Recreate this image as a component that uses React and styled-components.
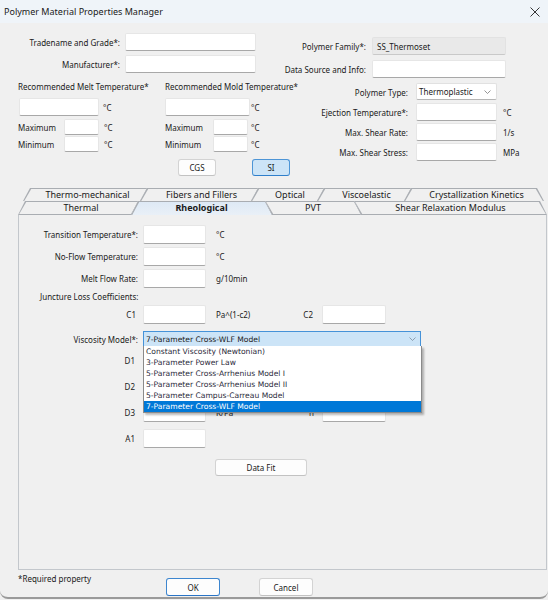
import React from "react";
import styled, { createGlobalStyle } from "styled-components";

const GlobalStyle = createGlobalStyle`
  * { box-sizing: border-box; }
  html, body { margin: 0; padding: 0; background: #f0f0f0; }
  body {
    font-family: "Noto Sans", "Open Sans", sans-serif;
    font-size: 8px;
    color: #1a1a1a;
  }
  #root { width: 548px; height: 600px; }
`;

const Window = styled.div`
  width: 548px;
  height: 599px;
  display: flex;
  flex-direction: column;
  background: #f0f0f0;
  border-bottom: 2px solid #9a9a9a;
  border-radius: 0 0 8px 8px;
  overflow: hidden;
`;

const TitleBar = styled.div`
  height: 23px;
  flex: 0 0 23px;
  display: flex;
  align-items: center;
  justify-content: space-between;
  padding: 0 8px 0 4px;
  background: #eff4f9;
  font-size: 9px;
  color: #1a1a1a;
`;

const CloseGlyph = styled.svg`
  width: 10px;
  height: 10px;
  display: block;
`;

const Body = styled.div`
  flex: 1;
  display: flex;
  flex-direction: column;
`;

/* ---------- top form ---------- */

const IdentityRow = styled.div`
  display: flex;
  align-items: flex-start;
  margin-top: 10px;
`;

const FieldGrid = styled.div`
  display: grid;
  grid-template-columns: ${(p) => p.$cols};
  grid-auto-rows: 18px;
  row-gap: ${(p) => p.$rowGap}px;
  margin-top: ${(p) => p.$mt || 0}px;
  align-items: center;
`;

const FieldLabel = styled.div`
  text-align: right;
  padding-right: ${(p) => p.$pad ?? 5}px;
  white-space: nowrap;
`;

const TextBox = styled.input.attrs({ type: "text", readOnly: true })`
  display: block;
  width: ${(p) => p.$w}px;
  height: ${(p) => p.$h || 18}px;
  margin: 0;
  padding: 0 4px;
  font: inherit;
  background: #ffffff;
  border: 1px solid #e6e6e6;
  border-bottom-color: #a8a8a8;
  border-radius: 2px;
  outline: none;
`;

const ReadOnlyBox = styled.div`
  width: ${(p) => p.$w}px;
  height: 18px;
  display: flex;
  align-items: center;
  padding-left: 4px;
  background: #e9e9e9;
  border: 1px solid #e2e2e2;
  border-bottom-color: #c9c9c9;
  border-radius: 2px;
`;

const ProcessRow = styled.div`
  display: flex;
  align-items: flex-start;
`;

const TempColumn = styled.div`
  width: 320px;
  flex: 0 0 320px;
  padding: 3px 0 0 18px;
`;

const TempGroups = styled.div`
  display: flex;
`;

const TempGroup = styled.div`
  width: ${(p) => p.$w}px;
  flex: 0 0 ${(p) => p.$w}px;
  display: flex;
  flex-direction: column;
`;

const GroupTitle = styled.div`
  height: 12px;
  line-height: 12px;
  white-space: nowrap;
`;

const MainTempRow = styled.div`
  display: flex;
  align-items: center;
  gap: ${(p) => p.$gap}px;
  margin: 5px 0 0 ${(p) => p.$ml || 0}px;
`;

const RangeGrid = styled.div`
  display: grid;
  grid-template-columns: ${(p) => p.$label}px 35px auto;
  grid-auto-rows: 16px;
  row-gap: 1px;
  align-items: center;
  margin-top: 3px;
`;

const Unit = styled.div`
  padding-left: ${(p) => p.$pad ?? 0}px;
  white-space: nowrap;
`;

const UnitButtons = styled.div`
  display: flex;
  gap: 36px;
  margin: 7px 0 0 160px;
`;

const PushButton = styled.button`
  width: ${(p) => p.$w}px;
  height: ${(p) => p.$h || 17}px;
  margin: 0;
  padding: 0;
  font: inherit;
  color: #1a1a1a;
  background: ${(p) => (p.$active ? "#cce4f7" : "#fdfdfd")};
  border: 1px solid ${(p) => (p.$active ? "#4d95d6" : p.$default ? "#3d86cf" : "#d3d3d3")};
  border-bottom-color: ${(p) => (p.$active ? "#2f7fcb" : p.$default ? "#2a74c4" : "#c2c2c2")};
  border-radius: 3px;
`;

const ComboBox = styled.div`
  width: 81px;
  height: 17px;
  display: flex;
  align-items: center;
  justify-content: space-between;
  padding: 0 5px 0 2px;
  background: #ffffff;
  border: 1px solid #e1e1e1;
  border-bottom-color: #b5b5b5;
  border-radius: 2px;
  align-self: start;
`;

const Chevron = styled.svg`
  width: 7px;
  height: 4px;
  display: block;
`;

/* ---------- tabs ---------- */

const TabsArea = styled.div`
  margin-top: 12px;
  display: flex;
  flex-direction: column;
`;

const TabRow = styled.div`
  display: flex;
  height: ${(p) => p.$h}px;
  padding-left: ${(p) => p.$offset}px;
`;

const S = 7;
const pt = (x, y) => `${x} ${y}`;
const outerPoly = (l, r) =>
  [
    l === "f" ? pt(`${S}px`, "0") : pt("0", "0"),
    r === "f" ? pt("100%", "0") : pt(`calc(100% - ${S}px)`, "0"),
    r === "f" ? pt(`calc(100% - ${S}px)`, "100%") : pt("100%", "100%"),
    l === "f" ? pt("0", "100%") : pt(`${S}px`, "100%"),
  ].join(", ");
const innerPoly = (l, r, last, bottom) => {
  const dl = 1.2;
  const dr = last ? 1.2 : 0;
  const b = bottom ? "calc(100% - 1px)" : "100%";
  return [
    l === "f" ? pt(`${S + dl}px`, "1px") : pt(`${dl}px`, "1px"),
    r === "f" ? pt(`calc(100% - ${dr}px)`, "1px") : pt(`calc(100% - ${S + dr}px)`, "1px"),
    r === "f" ? pt(`calc(100% - ${S + dr}px)`, b) : pt(`calc(100% - ${dr}px)`, b),
    l === "f" ? pt(`${dl}px`, b) : pt(`${S + dl}px`, b),
  ].join(", ");
};

const Tab = styled.div`
  position: relative;
  flex: 0 0 ${(p) => p.$w}px;
  width: ${(p) => p.$w}px;
  margin-left: ${(p) => (p.$first ? 0 : -S)}px;
  display: flex;
  align-items: center;
  justify-content: center;
  padding-left: ${(p) => p.$shift || 0}px;
  font-size: 9px;
  font-weight: ${(p) => (p.$selected ? 700 : 400)};
  color: #1a1a1a;
  white-space: nowrap;
  background: #a9adb2;
  clip-path: polygon(${(p) => outerPoly(p.$l, p.$r)});
  &::before {
    content: "";
    position: absolute;
    inset: 0;
    background: ${(p) =>
      p.$selected ? "linear-gradient(#dde9f5, #e9f0f7)" : "#f0f0f0"};
    clip-path: polygon(${(p) => innerPoly(p.$l, p.$r, p.$last, p.$bottom)});
  }
`;

const TabText = styled.span`
  position: relative;
  line-height: 12px;
`;

const Panel = styled.div`
  margin-left: 18px;
  width: 529px;
  height: 355px;
  border: 1px solid #c3c7cc;
  border-top: none;
  display: flex;
  flex-direction: column;
  padding-top: 10px;
`;

const PanelRow = styled.div`
  display: grid;
  grid-template-columns: 124px 63px 84px 32px 64px 35px;
  height: ${(p) => p.$h}px;
  margin-top: ${(p) => p.$mt}px;
  align-items: center;
`;

const PanelLabel = styled.div`
  text-align: right;
  padding-right: ${(p) => p.$pad ?? 5}px;
  white-space: nowrap;
`;

const SectionNote = styled.div`
  grid-column: 1 / -1;
  padding-left: 21px;
  white-space: nowrap;
`;

const SelectCell = styled.div`
  grid-column: 2 / 7;
  position: relative;
  height: 16px;
`;

const ModelSelect = styled.div`
  height: 16px;
  display: flex;
  align-items: center;
  justify-content: space-between;
  padding: 0 4px 0 2px;
  background: #cce4f7;
  border: 1px solid #4592d8;
  font-family: "DejaVu Sans", sans-serif;
  font-size: 7.6px;
  color: #1a1a1a;
`;

const DropList = styled.div`
  position: absolute;
  top: calc(100% - 1px);
  left: 0;
  width: calc(100% + 1px);
  background: #ffffff;
  border: 1px solid #8a8a8a;
  border-top: none;
  box-shadow: 2px 2px 2px rgba(0, 0, 0, 0.28);
  z-index: 5;
`;

const ListItem = styled.div`
  height: 11px;
  line-height: 11px;
  padding-left: 2px;
  font-family: "DejaVu Sans", sans-serif;
  font-size: 7.6px;
  white-space: nowrap;
  color: ${(p) => (p.$selected ? "#ffffff" : "#2a2a3a")};
  background: ${(p) => (p.$selected ? "#0078d7" : "transparent")};
`;

const FitRow = styled.div`
  display: flex;
  margin-top: 11px;
  padding-left: 196px;
`;

/* ---------- footer ---------- */

const Footer = styled.div`
  display: flex;
  align-items: flex-start;
  padding-left: 18px;
`;

const RequiredNote = styled.div`
  width: 148px;
  flex: 0 0 148px;
  margin-top: 3px;
  line-height: 11px;
`;

const DialogButtons = styled.div`
  display: flex;
  gap: 39px;
  margin-top: 8px;
`;

const rangeRows = (unitPad) =>
  ["Maximum", "Minimum"].map((name) => (
    <React.Fragment key={name}>
      <div>{name}</div>
      <TextBox $w={35} $h={16} />
      <Unit $pad={unitPad}>°C</Unit>
    </React.Fragment>
  ));

const models = [
  "Constant Viscosity (Newtonian)",
  "3-Parameter Power Law",
  "5-Parameter Cross-Arrhenius Model I",
  "5-Parameter Cross-Arrhenius Model II",
  "5-Parameter Campus-Carreau Model",
  "7-Parameter Cross-WLF Model",
];

export default function App() {
  return (
    <>
      <GlobalStyle />
      <Window>
        <TitleBar>
          <span>Polymer Material Properties Manager</span>
          <CloseGlyph viewBox="0 0 10 10">
            <path d="M0.5 0.5 L9.5 9.5 M9.5 0.5 L0.5 9.5" stroke="#1f1f1f" strokeWidth="0.9" fill="none" />
          </CloseGlyph>
        </TitleBar>
        <Body>
          <IdentityRow>
            <FieldGrid $cols="125px 131px" $rowGap={4}>
              <FieldLabel>Tradename and Grade*:</FieldLabel>
              <TextBox $w={131} />
              <FieldLabel>Manufacturer*:</FieldLabel>
              <TextBox $w={131} />
            </FieldGrid>
            <FieldGrid $cols="116px 134px" $rowGap={5} $mt={4}>
              <FieldLabel $pad={6}>Polymer Family*:</FieldLabel>
              <ReadOnlyBox $w={134}>SS_Thermoset</ReadOnlyBox>
              <FieldLabel $pad={6}>Data Source and Info:</FieldLabel>
              <TextBox $w={134} />
            </FieldGrid>
          </IdentityRow>

          <ProcessRow>
            <TempColumn>
              <TempGroups>
                <TempGroup $w={147}>
                  <GroupTitle>Recommended Melt Temperature*</GroupTitle>
                  <MainTempRow $gap={4} $ml={1}>
                    <TextBox $w={80} />
                    <Unit>°C</Unit>
                  </MainTempRow>
                  <RangeGrid $label={46}>{rangeRows(5)}</RangeGrid>
                </TempGroup>
                <TempGroup $w={155}>
                  <GroupTitle>Recommended Mold Temperature*</GroupTitle>
                  <MainTempRow $gap={1}>
                    <TextBox $w={85} />
                    <Unit>°C</Unit>
                  </MainTempRow>
                  <RangeGrid $label={48}>{rangeRows(3)}</RangeGrid>
                </TempGroup>
              </TempGroups>
              <UnitButtons>
                <PushButton $w={38}>CGS</PushButton>
                <PushButton $w={38} $active>SI</PushButton>
              </UnitButtons>
            </TempColumn>

            <FieldGrid $cols="96px 81px auto" $rowGap={2} $mt={5}>
              <FieldLabel $pad={8}>Polymer Type:</FieldLabel>
              <ComboBox>
                <span>Thermoplastic</span>
                <Chevron viewBox="0 0 7 4">
                  <path d="M0.5 0.5 L3.5 3.5 L6.5 0.5" stroke="#7a7a7a" strokeWidth="0.8" fill="none" />
                </Chevron>
              </ComboBox>
              <div />
              <FieldLabel $pad={8}>Ejection Temperature*:</FieldLabel>
              <TextBox $w={81} />
              <Unit $pad={6}>°C</Unit>
              <FieldLabel $pad={8}>Max. Shear Rate:</FieldLabel>
              <TextBox $w={81} />
              <Unit $pad={6}>1/s</Unit>
              <FieldLabel $pad={8}>Max. Shear Stress:</FieldLabel>
              <TextBox $w={81} />
              <Unit $pad={6}>MPa</Unit>
            </FieldGrid>
          </ProcessRow>

          <TabsArea>
            <TabRow $h={13} $offset={23}>
              <Tab $first $w={124} $l="f" $r="f" $shift={5}><TabText>Thermo-mechanical</TabText></Tab>
              <Tab $w={118} $l="f" $r="f" $shift={5}><TabText>Fibers and Fillers</TabText></Tab>
              <Tab $w={73} $l="f" $r="f" $shift={5}><TabText>Optical</TabText></Tab>
              <Tab $w={94} $l="f" $r="f" $shift={5}><TabText>Viscoelastic</TabText></Tab>
              <Tab $w={140} $l="f" $r="b" $last $shift={5}><TabText>Crystallization Kinetics</TabText></Tab>
            </TabRow>
            <TabRow $h={14} $offset={18}>
              <Tab $first $w={120} $l="f" $r="f" $bottom $shift={6}><TabText>Thermal</TabText></Tab>
              <Tab $w={141} $l="f" $r="b" $selected><TabText>Rheological</TabText></Tab>
              <Tab $w={96} $l="b" $r="b" $bottom><TabText>PVT</TabText></Tab>
              <Tab $w={193} $l="b" $r="b" $last $bottom><TabText>Shear Relaxation Modulus</TabText></Tab>
            </TabRow>
            <Panel>
              <PanelRow $h={19} $mt={0}>
                <PanelLabel>Transition Temperature*:</PanelLabel>
                <TextBox $w={63} $h={19} />
                <Unit $pad={10}>°C</Unit>
              </PanelRow>
              <PanelRow $h={19} $mt={3}>
                <PanelLabel>No-Flow Temperature:</PanelLabel>
                <TextBox $w={63} $h={19} />
                <Unit $pad={10}>°C</Unit>
              </PanelRow>
              <PanelRow $h={19} $mt={3}>
                <PanelLabel>Melt Flow Rate:</PanelLabel>
                <TextBox $w={63} $h={19} />
                <Unit $pad={10}>g/10min</Unit>
              </PanelRow>
              <PanelRow $h={11} $mt={3}>
                <SectionNote>Juncture Loss Coefficients:</SectionNote>
              </PanelRow>
              <PanelRow $h={19} $mt={3}>
                <PanelLabel $pad={7}>C1</PanelLabel>
                <TextBox $w={63} $h={19} />
                <Unit $pad={10}>Pa^(1-c2)</Unit>
                <PanelLabel $pad={9}>C2</PanelLabel>
                <TextBox $w={64} $h={19} />
              </PanelRow>
              <PanelRow $h={16} $mt={7}>
                <PanelLabel>Viscosity Model*:</PanelLabel>
                <SelectCell>
                  <ModelSelect>
                    <span>7-Parameter Cross-WLF Model</span>
                    <Chevron viewBox="0 0 7 4">
                      <path d="M0.5 0.5 L3.5 3.5 L6.5 0.5" stroke="#7a8a9a" strokeWidth="0.8" fill="none" />
                    </Chevron>
                  </ModelSelect>
                  <DropList>
                    {models.map((m, i) => (
                      <ListItem key={m} $selected={i === models.length - 1}>{m}</ListItem>
                    ))}
                  </DropList>
                </SelectCell>
              </PanelRow>
              <PanelRow $h={19} $mt={4}>
                <PanelLabel $pad={8}>D1</PanelLabel>
                <TextBox $w={63} $h={19} />
                <Unit $pad={10}>Pa-s</Unit>
                <PanelLabel $pad={8}>Tau*</PanelLabel>
                <TextBox $w={64} $h={19} />
              </PanelRow>
              <PanelRow $h={19} $mt={7}>
                <PanelLabel $pad={8}>D2</PanelLabel>
                <TextBox $w={63} $h={19} />
                <Unit $pad={10}>K</Unit>
                <PanelLabel $pad={8}>A2~</PanelLabel>
                <TextBox $w={64} $h={19} />
              </PanelRow>
              <PanelRow $h={19} $mt={7}>
                <PanelLabel $pad={8}>D3</PanelLabel>
                <TextBox $w={63} $h={19} />
                <Unit $pad={10}>K/Pa</Unit>
                <PanelLabel $pad={8}>n</PanelLabel>
                <TextBox $w={64} $h={19} />
              </PanelRow>
              <PanelRow $h={19} $mt={7}>
                <PanelLabel $pad={8}>A1</PanelLabel>
                <TextBox $w={63} $h={19} />
              </PanelRow>
              <FitRow>
                <PushButton $w={92} $h={17}>Data Fit</PushButton>
              </FitRow>
            </Panel>
          </TabsArea>

          <Footer>
            <RequiredNote>*Required property</RequiredNote>
            <DialogButtons>
              <PushButton $w={54} $h={18} $default>OK</PushButton>
              <PushButton $w={54} $h={18}>Cancel</PushButton>
            </DialogButtons>
          </Footer>
        </Body>
      </Window>
    </>
  );
}
